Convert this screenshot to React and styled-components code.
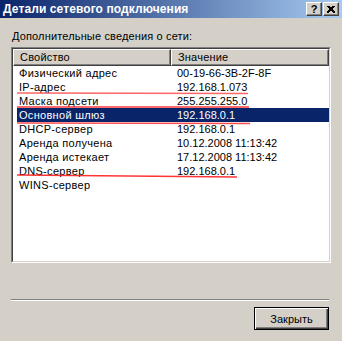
import React from "react";
import styled, { createGlobalStyle } from "styled-components";

const Global = createGlobalStyle`
  html, body { margin: 0; padding: 0; background: #d4d0c8; }
  body { font-family: "Liberation Sans", Arial, sans-serif; font-size: 11px; color: #000; }
`;

const Window = styled.div`
  position: relative;
  width: 342px;
  height: 341px;
  background: #d4d0c8;
  display: flex;
  flex-direction: column;
  overflow: hidden;
`;

const TitleBar = styled.div`
  height: 18px;
  display: flex;
  align-items: center;
  justify-content: space-between;
  padding: 0 3px 0 3px;
  background: linear-gradient(to right, #0a246a 0%, #a6caf0 100%);
`;

const Title = styled.div`
  color: #fff;
  font-weight: bold;
  font-size: 12px;
  letter-spacing: 0.1px;
  line-height: 18px;
`;

const Caption = styled.div`
  display: flex;
  gap: 1px;
`;

const CapButton = styled.div`
  width: 16px;
  height: 14px;
  box-sizing: border-box;
  background: #d4d0c8;
  border-top: 1px solid #fff;
  border-left: 1px solid #fff;
  border-right: 1px solid #404040;
  border-bottom: 1px solid #404040;
  box-shadow: inset -1px -1px 0 #808080;
  display: flex;
  align-items: center;
  justify-content: center;
  font-weight: bold;
  font-size: 11px;
  line-height: 1;
  color: #000;
`;

const Body = styled.div`
  flex: 1;
  display: flex;
  flex-direction: column;
  padding: 12px 11px 0 11px;
`;

const Label = styled.div`
  line-height: 13px;
  padding-left: 1px;
  letter-spacing: 0.15px;
`;

const ListOuter = styled.div`
  position: relative;
  margin-top: 4px;
  width: 320px;
  height: 216px;
  box-sizing: border-box;
  border: 1px solid;
  border-color: #808080 #fff #fff #808080;
`;

const ListInner = styled.div`
  height: 100%;
  box-sizing: border-box;
  border: 1px solid;
  border-color: #404040 #d4d0c8 #d4d0c8 #404040;
  background: #fff;
`;

const Header = styled.div`
  display: flex;
  height: 17px;
`;

const HeadCell = styled.div`
  width: 158px;
  box-sizing: border-box;
  background: #d4d0c8;
  border-top: 1px solid #fff;
  border-left: 1px solid #fff;
  border-right: 1px solid #404040;
  border-bottom: 1px solid #404040;
  box-shadow: inset -1px -1px 0 #808080;
  padding-left: 6px;
  line-height: 15px;
  letter-spacing: 0.2px;
`;

const Row = styled.div`
  display: flex;
  height: 14px;
  line-height: 14px;
  margin-left: 4px;
  width: 312px;
  background: ${(p) => (p.$selected ? "#0a246a" : "transparent")};
  color: ${(p) => (p.$selected ? "#fff" : "#000")};
`;

const Cell = styled.div`
  width: ${(p) => p.$w}px;
  padding-left: ${(p) => p.$pl}px;
  box-sizing: border-box;
  white-space: nowrap;
  letter-spacing: ${(p) => p.$ls || 0}px;
`;

const Separator = styled.div`
  margin-top: 36px;
  height: 0;
  width: 318px;
  border-top: 1px solid #808080;
  border-bottom: 1px solid #fff;
`;

const Footer = styled.div`
  display: flex;
  justify-content: flex-end;
  margin-top: 6px;
  padding-right: 2px;
`;

const Button = styled.div`
  width: 75px;
  height: 23px;
  box-sizing: border-box;
  border: 1px solid #000;
  display: flex;
  align-items: center;
  justify-content: center;
  box-shadow: inset 1px 1px 0 #fff, inset -1px -1px 0 #404040, inset -2px -2px 0 #808080;
  background: #d4d0c8;
`;

const Marks = styled.svg`
  position: absolute;
  left: 0;
  top: 0;
  pointer-events: none;
`;

const rows = [
  ["Физический адрес", "00-19-66-3B-2F-8F"],
  ["IP-адрес", "192.168.1.073"],
  ["Маска подсети", "255.255.255.0"],
  ["Основной шлюз", "192.168.0.1", true],
  ["DHCP-сервер", "192.168.0.1"],
  ["Аренда получена", "10.12.2008 11:13:42"],
  ["Аренда истекает", "17.12.2008 11:13:42"],
  ["DNS-сервер", "192.168.0.1"],
  ["WINS-сервер", ""],
];

export default function App() {
  return (
    <Window>
      <Global />
      <TitleBar>
        <Title>Детали сетевого подключения</Title>
        <Caption>
          <CapButton>?</CapButton>
          <CapButton>
            <svg width="8" height="7" viewBox="0 0 8 7">
              <path d="M0.5 0 L7.5 7 M1.5 0 L8.5 7 M7.5 0 L0.5 7 M6.5 0 L-0.5 7" stroke="#000" strokeWidth="1" shapeRendering="crispEdges" />
            </svg>
          </CapButton>
        </Caption>
      </TitleBar>
      <Body>
        <Label>Дополнительные сведения о сети:</Label>
        <ListOuter>
          <ListInner>
            <Header>
              <HeadCell>Свойство</HeadCell>
              <HeadCell>Значение</HeadCell>
            </Header>
            {rows.map(([k, v, sel]) => (
              <Row key={k} $selected={sel}>
                <Cell $w={154} $pl={2} $ls={0.3}>{k}</Cell>
                <Cell $w={158} $pl={6}>{v}</Cell>
              </Row>
            ))}
          </ListInner>
        </ListOuter>
        <Separator />
        <Footer>
          <Button>Закрыть</Button>
        </Footer>
      </Body>
      <Marks width="342" height="341" viewBox="0 0 342 341">
        <line x1="17" y1="93" x2="248" y2="93.5" stroke="#ff4040" strokeWidth="1.3" opacity="0.8" />
        <line x1="17" y1="107" x2="249" y2="107" stroke="#ff2020" strokeWidth="1.3" opacity="0.9" />
        <line x1="17" y1="123" x2="250" y2="123.5" stroke="#ff3030" strokeWidth="1.3" opacity="0.85" />
        <line x1="17" y1="175" x2="237" y2="177" stroke="#ff2020" strokeWidth="1.3" opacity="0.9" />
      </Marks>
    </Window>
  );
}
